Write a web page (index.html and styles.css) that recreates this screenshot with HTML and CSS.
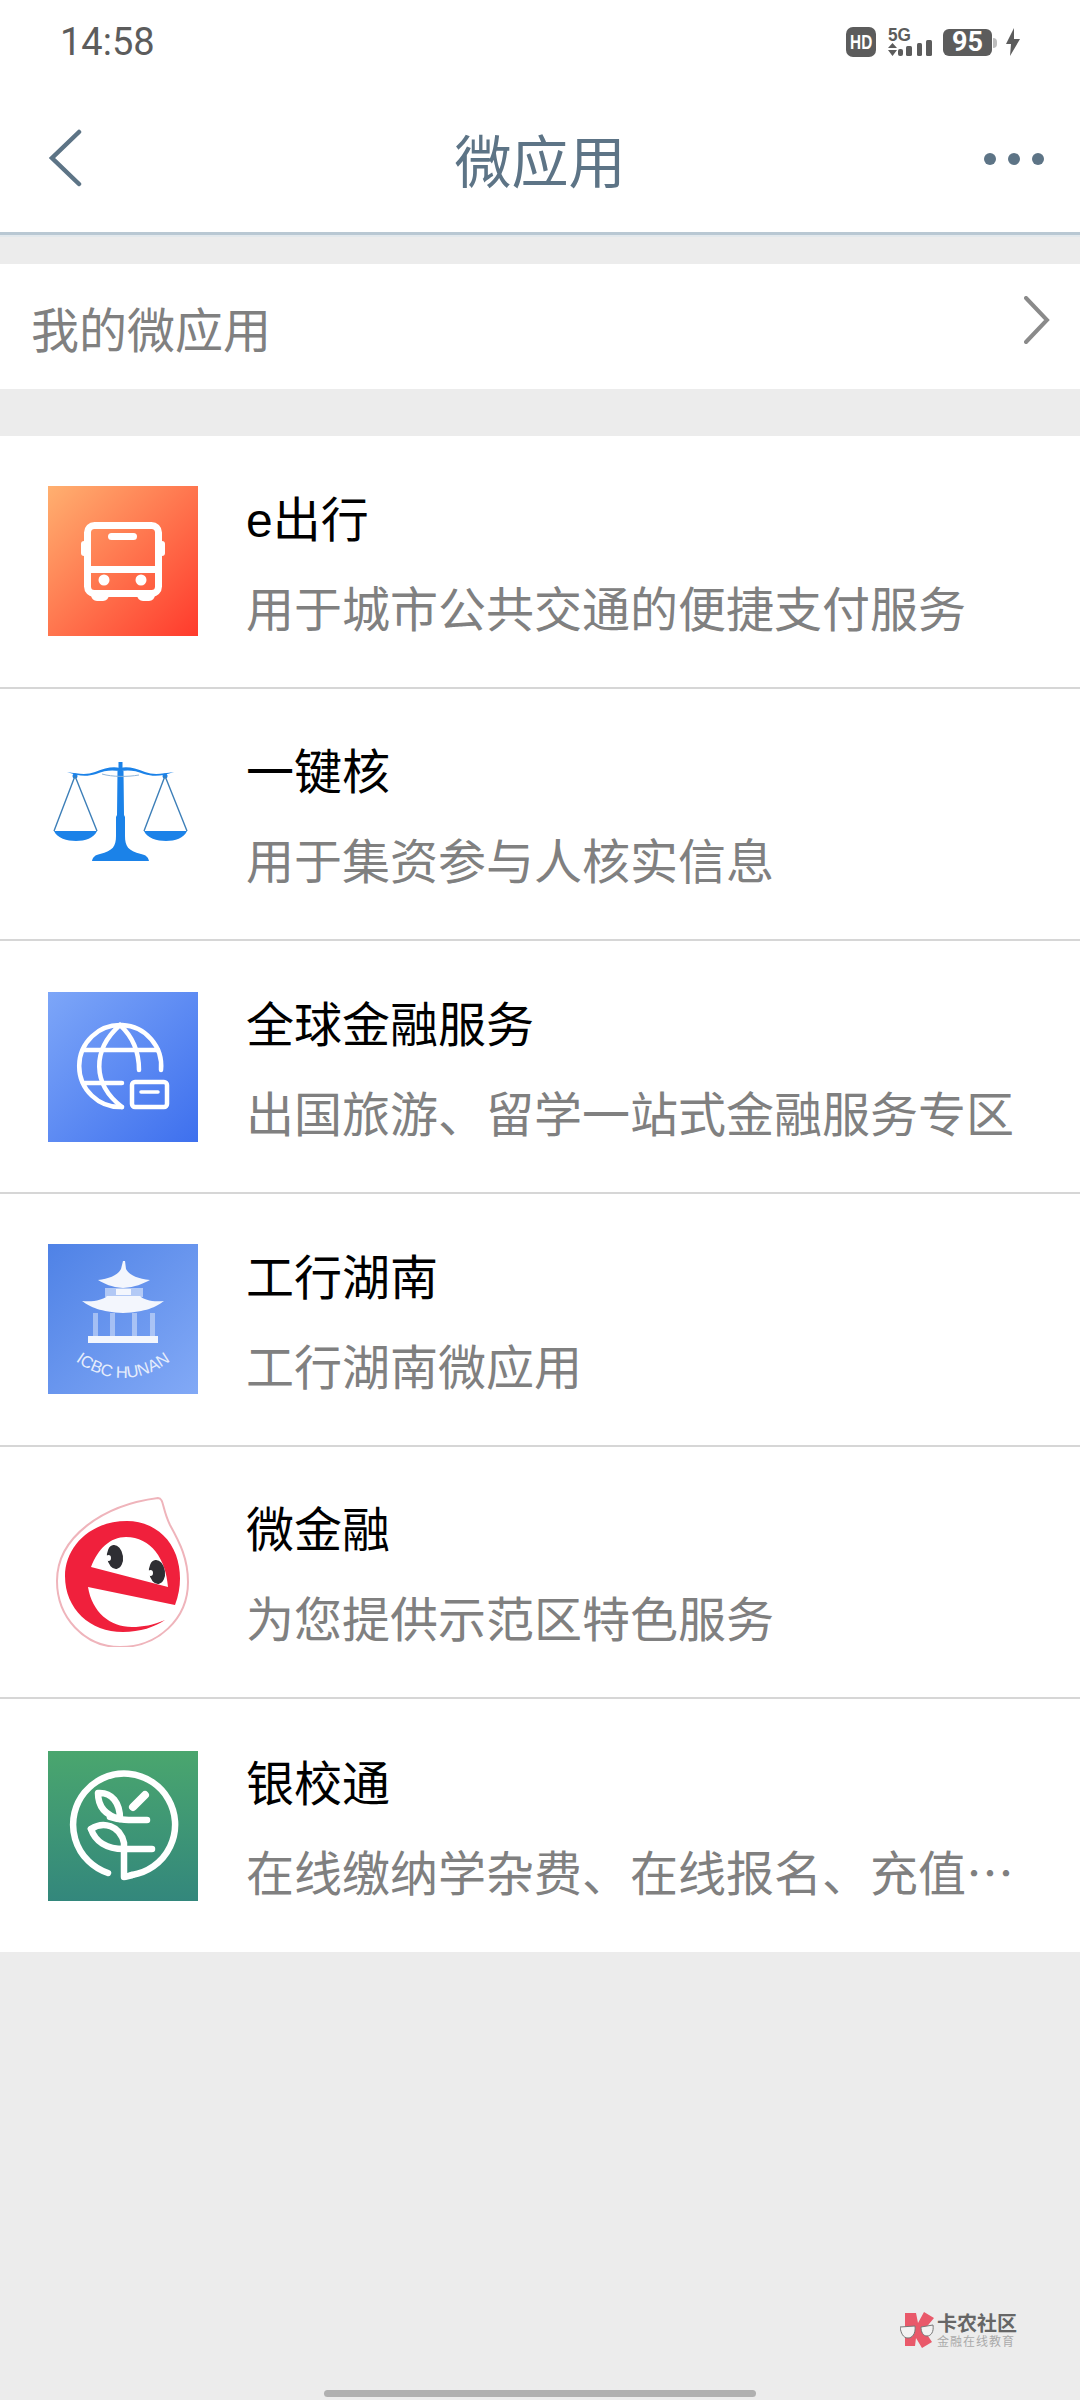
FILE: index.html
```html
<!DOCTYPE html>
<html lang="zh-CN">
<head>
<meta charset="utf-8">
<title>微应用</title>
<link rel="stylesheet" href="styles.css">
</head>
<body>
<div class="page">
  <div class="statusbar">
    <span class="time">14:58</span>
    <div class="status-icons">
      <div class="hd"><span class="hd-text">HD</span></div>
      <svg class="signal" viewBox="0 0 44 30">
        <text x="0" y="14" class="five-g" textLength="23" lengthAdjust="spacingAndGlyphs">5G</text>
        <path d="M0 21l4.500-5 4.500 5zM0 23h9l-4.500 6z" fill="#5c5c5c"/>
        <rect x="10" y="22" width="5" height="7" rx="2" fill="#5c5c5c"/>
        <rect x="18" y="19" width="6" height="10" rx="1.500" fill="#5c5c5c"/>
        <rect x="29" y="16" width="5" height="13" rx="1.500" fill="#5c5c5c"/>
        <rect x="38" y="13" width="6" height="16" rx="1.500" fill="#5c5c5c"/>
      </svg>
      <div class="battery"><span class="batt-text">95</span></div>
      <svg class="bolt" viewBox="0 0 14 28"><path d="M8 0L0 16h5l-1 12 10-17H8z" fill="#5c5c5c"/></svg>
    </div>
  </div>

  <header class="nav">
    <svg class="nav-back" viewBox="0 0 34 58"><path d="M31 3L4 29l27 26"/></svg>
    <h1 class="nav-title">微应用</h1>
    <svg class="nav-more" viewBox="0 0 60 12"><circle cx="6" cy="6" r="6"/><circle cx="30" cy="6" r="6"/><circle cx="54" cy="6" r="6"/></svg>
  </header>

  <section class="mine">
    <span class="mine-label">我的微应用</span>
    <svg class="mine-arrow" viewBox="0 0 26 48"><path d="M2 2l21 22L2 46"/></svg>
  </section>

  <ul class="apps">
    <li class="app">
      <svg class="app-icon" viewBox="0 0 150 150">
        <defs><linearGradient id="gBus" x1="0" y1="0" x2="1" y2="1"><stop offset="0" stop-color="#ffb070"/><stop offset="1" stop-color="#ff3a2c"/></linearGradient></defs>
        <rect width="150" height="150" fill="url(#gBus)"/>
        <g fill="#fff">
          <rect x="33" y="55" width="6" height="15" rx="3"/><rect x="111" y="55" width="6" height="15" rx="3"/>
          <rect x="60" y="47" width="29" height="7" rx="3.500"/>
          <circle cx="56" cy="94" r="5.500"/><circle cx="93" cy="94" r="5.500"/>
          <rect x="38" y="80" width="74" height="7"/>
          <path d="M43 107h18v2a6 6 0 0 1-6 6h-6a6 6 0 0 1-6-6zM89 107h18v2a6 6 0 0 1-6 6h-6a6 6 0 0 1-6-6z"/>
        </g>
        <rect x="39.500" y="39.500" width="71" height="68" rx="7" fill="none" stroke="#fff" stroke-width="7"/>
      </svg>
      <div class="app-text"><div class="app-name">e出行</div><div class="app-desc">用于城市公共交通的便捷支付服务</div></div>
    </li>
    <li class="app">
      <svg class="app-icon" viewBox="0 0 150 150">
        <g fill="#1b82e8">
          <path d="M19 33c12 2 20 3 28 0 10-4 18-6 25-4 7-2 15 0 25 4 8 3 16 2 29 0-11 4-20 5-30 2-9-4-16-4-24-3-8-1-15-1-24 3-10 3-18 2-29-2z"/>
          <rect x="70.500" y="23" width="4" height="9"/>
          <path d="M69.500 32h6l.500 44 1 2v19c0 10 3 15 16 18 5 1 7 3 8 7H44c1-4 3-6 8-7 13-3 16-8 16-18V78l1-2z"/>
          <path d="M6 92h43c-3 7-12 10-21 10S9 99 6 92zM96 92h43c-3 7-12 10-21 10s-19-3-22-10z"/>
          <circle cx="27" cy="37" r="2.500"/><circle cx="117" cy="37" r="2.500"/>
        </g>
        <path d="M27 37L6 92M27 37l22 55M117 37L96 92M117 37l22 55" stroke="#3d7fb8" stroke-width="1.400" fill="none"/>
        <path d="M54 35c10 3 26 3 37 1" stroke="#8fb4d8" stroke-width="1" fill="none"/>
      </svg>
      <div class="app-text"><div class="app-name">一键核</div><div class="app-desc">用于集资参与人核实信息</div></div>
    </li>
    <li class="app">
      <svg class="app-icon" viewBox="0 0 150 150">
        <defs><linearGradient id="gGlobe" x1="0" y1="0" x2="1" y2="1"><stop offset="0" stop-color="#7da6f8"/><stop offset="1" stop-color="#3e70ee"/></linearGradient></defs>
        <rect width="150" height="150" fill="url(#gGlobe)"/>
        <g fill="none" stroke="#fff" stroke-width="4.500" stroke-linecap="round">
          <path d="M113 78A41 41 0 1 0 74 115"/>
          <path d="M72 33C44 58 44 92 74 115"/>
          <path d="M72 33C84 44 91 60 91 78"/>
          <path d="M35 58H110M35 91H74"/>
          <rect x="84" y="90" width="35" height="25" rx="3"/>
          <path d="M93 100H110" stroke-width="3.500"/>
        </g>
      </svg>
      <div class="app-text"><div class="app-name">全球金融服务</div><div class="app-desc">出国旅游、留学一站式金融服务专区</div></div>
    </li>
    <li class="app">
      <svg class="app-icon" viewBox="0 0 150 150">
        <defs>
          <linearGradient id="gHunan" x1="0" y1="0" x2="1" y2="1"><stop offset="0" stop-color="#4f82e6"/><stop offset="1" stop-color="#82a9f6"/></linearGradient>
          <path id="arcHunan" d="M22 113Q75 155 128 113"/>
        </defs>
        <rect width="150" height="150" fill="url(#gHunan)"/>
        <g fill="#f3f6fd">
          <path d="M75 17h2l1 8c3 6 12 10 24 11-8 4-14 7-27 8-12-1-18-4-25-8 11-1 20-5 23-11z"/>
          <path d="M57 44h38v9H57z" opacity=".55"/>
          <rect x="68" y="45" width="15" height="6"/>
          <path d="M59 52h33c4 4 12 6 24 5-8 6-18 11-41 12-22-1-33-6-41-12 12 1 21-1 25-5z"/>
          <rect x="40" y="92" width="70" height="7"/>
          <g opacity=".45"><rect x="45" y="69" width="5" height="23"/><rect x="62" y="69" width="5" height="23"/><rect x="84" y="69" width="5" height="23"/><rect x="102" y="69" width="5" height="23"/></g>
        </g>
        <text class="hunan-text"><textPath href="#arcHunan" startOffset="50%">ICBC HUNAN</textPath></text>
      </svg>
      <div class="app-text"><div class="app-name">工行湖南</div><div class="app-desc">工行湖南微应用</div></div>
    </li>
    <li class="app">
      <svg class="app-icon" viewBox="0 0 150 150">
        <path d="M110 1C116 1 114 12 122 28 132 46 140 62 140 85 140 122 110 150 72 150 36 150 9 120 9 84 9 40 55 8 110 1z" fill="#fff" stroke="#efb4bb" stroke-width="2"/>
        <path fill-rule="evenodd" fill="#f0203c" d="M127 108C134 90 133 72 128 58 120 36 100 24 79 24 42 24 17 50 17 79 17 112 42 135 75 135 92 135 107 130 117 123 105 128 95 130 84 130 62 130 44 115 40 90zM43 70C50 52 62 40 78 40 103 40 118 62 120 90z"/>
        <ellipse cx="67" cy="60" rx="8" ry="12" fill="#2e2e33" transform="rotate(-8 67 60)"/>
        <ellipse cx="109" cy="75" rx="8" ry="12" fill="#2e2e33" transform="rotate(-8 109 75)"/>
        <ellipse cx="60.500" cy="61" rx="2.500" ry="3" fill="#fff"/>
        <ellipse cx="102.500" cy="76" rx="2.500" ry="3" fill="#fff"/>
      </svg>
      <div class="app-text"><div class="app-name">微金融</div><div class="app-desc">为您提供示范区特色服务</div></div>
    </li>
    <li class="app">
      <svg class="app-icon" viewBox="0 0 150 150">
        <defs><linearGradient id="gLeaf" x1="0" y1="0" x2="0" y2="1"><stop offset="0" stop-color="#4aa66e"/><stop offset="1" stop-color="#33877c"/></linearGradient></defs>
        <rect width="150" height="150" fill="url(#gLeaf)"/>
        <g fill="none" stroke="#fff" stroke-width="6.500" stroke-linecap="round" stroke-linejoin="round">
          <path d="M60 122A51 51 0 1 1 84 124"/>
          <path d="M50 42C64 41 72 52 72 68 60 65 50 58 50 42z"/>
          <path d="M62 66C74 70 84 69 99 69"/>
          <path d="M85 56L97 44" stroke-width="8"/>
          <path d="M43 78C55 70 72 74 76 92V126C78 126 80 125 84 124"/>
          <path d="M43 78C47 90 58 98 76 98H104"/>
        </g>
      </svg>
      <div class="app-text"><div class="app-name">银校通</div><div class="app-desc app-desc-clip">在线缴纳学杂费、在线报名、充值缴费</div></div>
    </li>
  </ul>

  <div class="watermark">
    <svg class="wm-logo" viewBox="0 0 34 36">
      <path d="M5 1H16L18 11 24 0 34 6 24 18 32 30 22 36 16 26 15 34H5z" fill="#e9596a"/>
      <g fill="#f2f2f2" stroke="#777" stroke-width="1"><path d="M0 15L15 14C16 22 12 26 8 26 3 26 1 21 0 15z"/><path d="M21 15L33 13C34 20 31 24 27 24 23 24 21 20 21 15z"/></g>
    </svg>
    <div class="wm-text"><div class="wm-name">卡农社区</div><div class="wm-sub">金融在线教育</div></div>
  </div>
  <div class="home-bar"></div>
</div>
</body>
</html>
```
FILE: styles.css
```css
* { box-sizing: border-box; }
html, body { margin: 0; padding: 0; }
body {
  width: 1080px;
  height: 2400px;
  background: #ececec;
  font-family: "Liberation Sans", "Noto Sans CJK SC", sans-serif;
  overflow: hidden;
}
.page { position: relative; width: 1080px; height: 2400px; }

.statusbar {
  height: 84px;
  background: #fff;
  display: flex;
  align-items: center;
  justify-content: space-between;
  padding: 0 60px;
}
.time { font-family: Roboto, sans-serif; font-size: 38px; color: #5c5c5c; }
.status-icons { display: flex; align-items: center; }
.hd {
  width: 30px;
  height: 30px;
  margin-right: 12px;
  border-radius: 7px;
  background: #5c5c5c;
  display: flex;
  align-items: center;
  justify-content: center;
}
.hd-text { font: 700 21px/30px "Liberation Sans", sans-serif; color: #fff; transform: scaleX(.73); }
.signal { width: 44px; height: 30px; margin-right: 11px; overflow: visible; }
.five-g { font: 700 19px "Liberation Sans", sans-serif; fill: #5c5c5c; }
.battery {
  position: relative;
  width: 49px;
  height: 27px;
  margin-right: 14px;
  border-radius: 6px;
  background: #5c5c5c;
  display: flex;
  align-items: center;
  justify-content: center;
}
.battery::after {
  content: "";
  position: absolute;
  left: 50px;
  top: 9px;
  width: 4px;
  height: 10px;
  border-radius: 0 4px 4px 0;
  background: #bdbdbd;
}
.batt-text { font: 700 27px/27px Roboto, sans-serif; color: #fff; }
.bolt { width: 14px; height: 28px; }

.nav {
  height: 151px;
  background: #fff;
  border-bottom: 3px solid #b9c8d3;
  box-shadow: 0 2px 0 #e2e8ec;
  display: flex;
  align-items: center;
  justify-content: space-between;
  padding: 0 36px 0 48px;
  position: relative;
}
.nav-back { width: 34px; height: 58px; fill: none; stroke: #5d7486; stroke-width: 4.500; stroke-linecap: round; }
.nav-title { margin: 0 0 0 14px; font-size: 57px; font-weight: 400; color: #5d7486; font-family: "Noto Sans CJK SC", sans-serif; }
.nav-more { width: 60px; height: 12px; margin-top: 2px; fill: #5d7486; }

.mine {
  margin-top: 29px;
  height: 125px;
  background: #fff;
  display: flex;
  align-items: center;
  justify-content: space-between;
  padding: 0 30px 0 31px;
}
.mine-label { font-size: 48px; color: #808080; font-family: "Noto Sans CJK SC", sans-serif; }
.mine-arrow { width: 26px; height: 48px; margin-bottom: 14px; fill: none; stroke: #8a8a8a; stroke-width: 4; stroke-linecap: round; }

.apps { list-style: none; margin: 47px 0 0; padding: 0; background: #fff; }
.app {
  height: 252.67px;
  display: flex;
  align-items: center;
  padding: 0 40px 0 48px;
  border-bottom: 2px solid #d6d6d6;
}
.app:last-child { border-bottom: 0; }
.app-icon { width: 150px; height: 150px; flex: none; }
.app-text { margin-left: 48px; padding-top: 9px; min-width: 0; flex: 1; }
.app-name { font-size: 48px; line-height: 60px; color: #000; }
.app-desc {
  margin-top: 20px;
  font-size: 48px;
  line-height: 70px;
  color: #808080;
  font-family: "Noto Sans CJK SC", sans-serif;
  white-space: nowrap;
}
.app-desc-clip { overflow: hidden; text-overflow: ellipsis; }
.hunan-text { font: 400 16.500px "Liberation Sans", sans-serif; fill: #e6edfb; text-anchor: middle; }

.watermark {
  position: absolute;
  left: 900px;
  top: 2312px;
  display: flex;
  gap: 3px;
  align-items: flex-start;
}
.wm-logo { width: 34px; height: 36px; }
.wm-name { font-size: 20px; line-height: 22px; font-weight: 700; color: #666; font-family: "Noto Sans CJK SC", sans-serif; }
.wm-sub { font-size: 12px; line-height: 14px; color: #aaa; letter-spacing: 1px; font-family: "Noto Sans CJK SC", sans-serif; }

.home-bar {
  position: absolute;
  left: 324px;
  top: 2390px;
  width: 432px;
  height: 7px;
  border-radius: 3.500px;
  background: #b0b0b0;
}
```
